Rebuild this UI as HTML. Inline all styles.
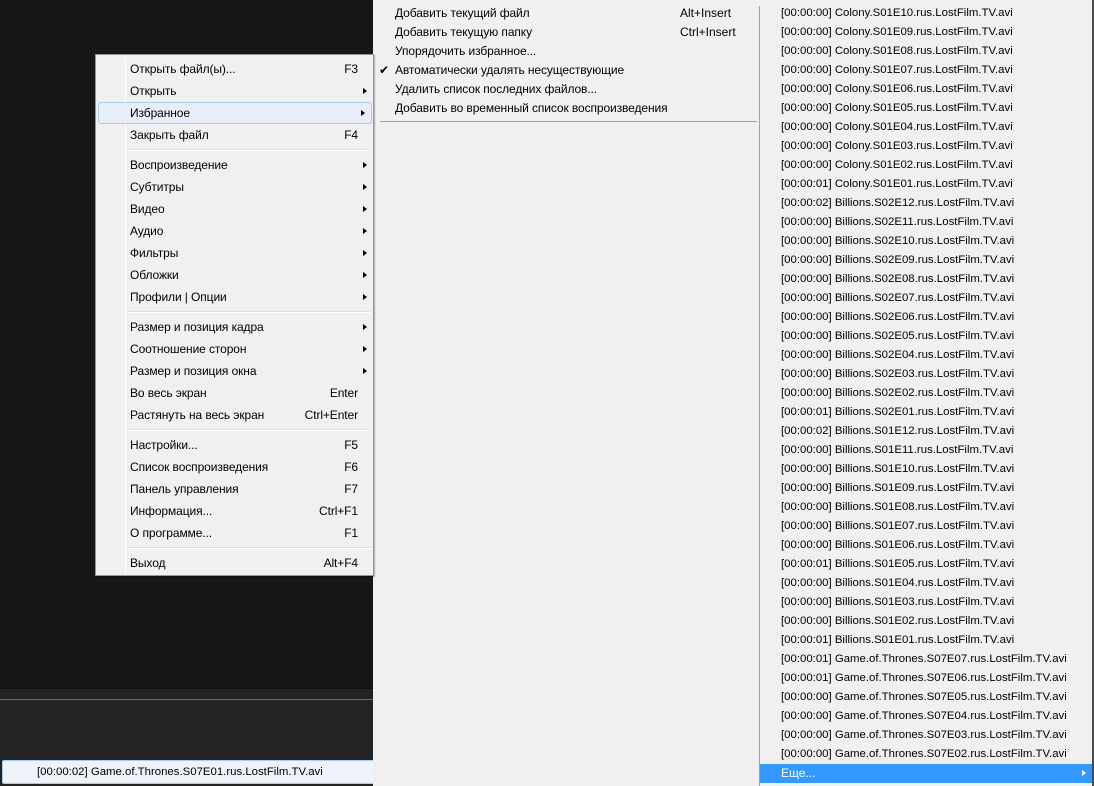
<!DOCTYPE html>
<html><head><meta charset="utf-8"><style>
*{margin:0;padding:0;box-sizing:border-box}
body{width:1094px;height:786px;overflow:hidden;background:#171717;font-family:"Liberation Sans",sans-serif;font-size:12px;color:#000;position:relative}
.abs{position:absolute}
#strip{left:0;top:688px;width:375px;height:98px;background:#232323;border-top:1px solid #111}
#strip:before{content:"";position:absolute;left:0;top:10px;width:375px;height:1px;background:#6a6a6a}
#stat{left:2px;top:760px;width:373px;height:24px;background:#eef3fa;border:1px solid #a8c8ec;border-radius:2px;line-height:22px;padding-left:34px;color:#000;font-size:11.4px}
#main{left:95px;top:54px;width:279px;height:522px;background:#f0f0f0;border:1px solid #979797;padding-top:3px;box-shadow:1px 1px 1px rgba(0,0,0,.3)}
#main .col{position:absolute;left:29px;top:2px;bottom:2px;width:1px;background:#e2e3e3;border-right:1px solid #fff}
.it{position:relative;height:22px;line-height:22px;padding-left:34px;letter-spacing:-0.1px}
.it .k{position:absolute;right:15px;top:0}
.it .a{position:absolute;right:6px;top:8px;width:0;height:0;border-left:4px solid #000;border-top:3.5px solid transparent;border-bottom:3.5px solid transparent}
.hov{background:#e7eef8;border:1px solid #aecbee;border-radius:3px;margin:0 1px 0 2px;padding-left:31px;line-height:20px}
.hov .a{top:7px}
.sep{height:8px;position:relative}
.sep:after{content:"";position:absolute;left:32px;right:2px;top:3px;height:1px;background:#e0e0e0;border-bottom:1px solid #fff}
#sub{left:373px;top:0;width:721px;height:786px;background:#f0f0f0;border-right:2px solid #4a4a4a}
.s{position:absolute;left:22px;height:19px;line-height:19px;white-space:nowrap;letter-spacing:-0.1px}
.sk{position:absolute;left:307px;height:19px;line-height:19px}
#rl{position:absolute;left:387px;top:4px;width:332px;font-size:11.4px}
#rl div{height:19px;line-height:19px;padding-left:21px;white-space:nowrap}
#rl .hl{background:#3399ff;color:#fff;position:relative;font-size:12px}
</style></head><body>
<div id="strip" class="abs"></div>
<div id="stat" class="abs">[00:00:02] Game.of.Thrones.S07E01.rus.LostFilm.TV.avi</div>
<div id="sub" class="abs">
<div class="s" style="top:4px">Добавить текущий файл</div><div class="sk" style="top:4px">Alt+Insert</div>
<div class="s" style="top:23px">Добавить текущую папку</div><div class="sk" style="top:23px">Ctrl+Insert</div>
<div class="s" style="top:42px">Упорядочить избранное...</div>
<div class="s" style="top:61px;left:6px">✔</div><div class="s" style="top:61px">Автоматически удалять несуществующие</div>
<div class="s" style="top:80px">Удалить список последних файлов...</div>
<div class="s" style="top:99px">Добавить во временный список воспроизведения</div>
<div class="abs" style="left:7px;top:121px;width:377px;height:1px;background:#a0a0a0"></div>
<div class="abs" style="left:386px;top:6px;width:1px;height:780px;background:#a0a0a0"></div>
<div id="rl">
<div>[00:00:00] Colony.S01E10.rus.LostFilm.TV.avi</div>
<div>[00:00:00] Colony.S01E09.rus.LostFilm.TV.avi</div>
<div>[00:00:00] Colony.S01E08.rus.LostFilm.TV.avi</div>
<div>[00:00:00] Colony.S01E07.rus.LostFilm.TV.avi</div>
<div>[00:00:00] Colony.S01E06.rus.LostFilm.TV.avi</div>
<div>[00:00:00] Colony.S01E05.rus.LostFilm.TV.avi</div>
<div>[00:00:00] Colony.S01E04.rus.LostFilm.TV.avi</div>
<div>[00:00:00] Colony.S01E03.rus.LostFilm.TV.avi</div>
<div>[00:00:00] Colony.S01E02.rus.LostFilm.TV.avi</div>
<div>[00:00:01] Colony.S01E01.rus.LostFilm.TV.avi</div>
<div>[00:00:02] Billions.S02E12.rus.LostFilm.TV.avi</div>
<div>[00:00:00] Billions.S02E11.rus.LostFilm.TV.avi</div>
<div>[00:00:00] Billions.S02E10.rus.LostFilm.TV.avi</div>
<div>[00:00:00] Billions.S02E09.rus.LostFilm.TV.avi</div>
<div>[00:00:00] Billions.S02E08.rus.LostFilm.TV.avi</div>
<div>[00:00:00] Billions.S02E07.rus.LostFilm.TV.avi</div>
<div>[00:00:00] Billions.S02E06.rus.LostFilm.TV.avi</div>
<div>[00:00:00] Billions.S02E05.rus.LostFilm.TV.avi</div>
<div>[00:00:00] Billions.S02E04.rus.LostFilm.TV.avi</div>
<div>[00:00:00] Billions.S02E03.rus.LostFilm.TV.avi</div>
<div>[00:00:00] Billions.S02E02.rus.LostFilm.TV.avi</div>
<div>[00:00:01] Billions.S02E01.rus.LostFilm.TV.avi</div>
<div>[00:00:02] Billions.S01E12.rus.LostFilm.TV.avi</div>
<div>[00:00:00] Billions.S01E11.rus.LostFilm.TV.avi</div>
<div>[00:00:00] Billions.S01E10.rus.LostFilm.TV.avi</div>
<div>[00:00:00] Billions.S01E09.rus.LostFilm.TV.avi</div>
<div>[00:00:00] Billions.S01E08.rus.LostFilm.TV.avi</div>
<div>[00:00:00] Billions.S01E07.rus.LostFilm.TV.avi</div>
<div>[00:00:00] Billions.S01E06.rus.LostFilm.TV.avi</div>
<div>[00:00:01] Billions.S01E05.rus.LostFilm.TV.avi</div>
<div>[00:00:00] Billions.S01E04.rus.LostFilm.TV.avi</div>
<div>[00:00:00] Billions.S01E03.rus.LostFilm.TV.avi</div>
<div>[00:00:00] Billions.S01E02.rus.LostFilm.TV.avi</div>
<div>[00:00:01] Billions.S01E01.rus.LostFilm.TV.avi</div>
<div>[00:00:01] Game.of.Thrones.S07E07.rus.LostFilm.TV.avi</div>
<div>[00:00:01] Game.of.Thrones.S07E06.rus.LostFilm.TV.avi</div>
<div>[00:00:00] Game.of.Thrones.S07E05.rus.LostFilm.TV.avi</div>
<div>[00:00:00] Game.of.Thrones.S07E04.rus.LostFilm.TV.avi</div>
<div>[00:00:00] Game.of.Thrones.S07E03.rus.LostFilm.TV.avi</div>
<div>[00:00:00] Game.of.Thrones.S07E02.rus.LostFilm.TV.avi</div>
<div class="hl">Еще...<span style="position:absolute;right:6px;top:6px;width:0;height:0;border-left:4px solid #fff;border-top:3.5px solid transparent;border-bottom:3.5px solid transparent"></span></div>
</div>
</div>
<div id="main" class="abs"><div class="col"></div>
<div class="it">Открыть файл(ы)...<span class="k">F3</span></div>
<div class="it">Открыть<span class="a"></span></div>
<div class="it hov">Избранное<span class="a"></span></div>
<div class="it">Закрыть файл<span class="k">F4</span></div>
<div class="sep"></div>
<div class="it">Воспроизведение<span class="a"></span></div>
<div class="it">Субтитры<span class="a"></span></div>
<div class="it">Видео<span class="a"></span></div>
<div class="it">Аудио<span class="a"></span></div>
<div class="it">Фильтры<span class="a"></span></div>
<div class="it">Обложки<span class="a"></span></div>
<div class="it">Профили | Опции<span class="a"></span></div>
<div class="sep"></div>
<div class="it">Размер и позиция кадра<span class="a"></span></div>
<div class="it">Соотношение сторон<span class="a"></span></div>
<div class="it">Размер и позиция окна<span class="a"></span></div>
<div class="it">Во весь экран<span class="k">Enter</span></div>
<div class="it">Растянуть на весь экран<span class="k">Ctrl+Enter</span></div>
<div class="sep"></div>
<div class="it">Настройки...<span class="k">F5</span></div>
<div class="it">Список воспроизведения<span class="k">F6</span></div>
<div class="it">Панель управления<span class="k">F7</span></div>
<div class="it">Информация...<span class="k">Ctrl+F1</span></div>
<div class="it">О программе...<span class="k">F1</span></div>
<div class="sep"></div>
<div class="it">Выход<span class="k">Alt+F4</span></div>
</div>
</body></html>
